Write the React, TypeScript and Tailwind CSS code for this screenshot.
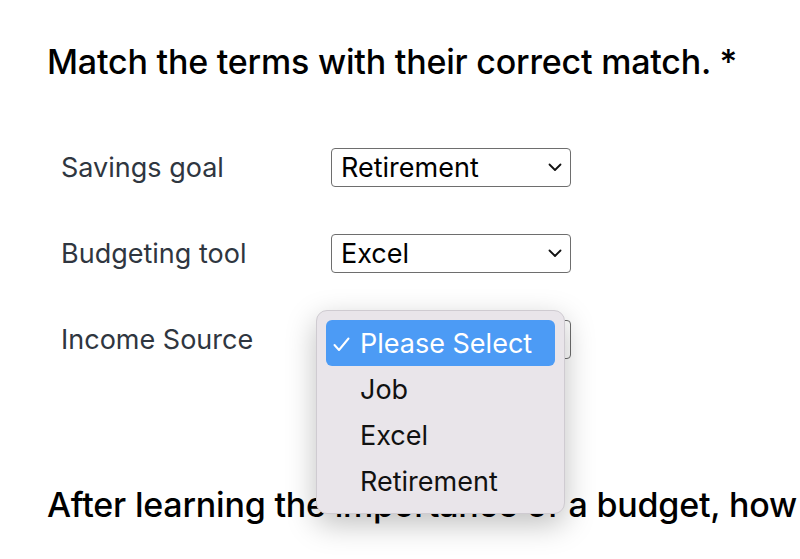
import React from 'react';

const rows = [
  { label: 'Savings goal', value: 'Retirement' },
  { label: 'Budgeting tool', value: 'Excel' },
  { label: 'Income Source', value: 'Please Select' },
];

const options = ['Job', 'Excel', 'Retirement'];

function Chevron() {
  return (
    <svg width="14" height="9" viewBox="0 0 14 9" fill="none">
      <path d="M1.5 1.5L7 7L12.5 1.5" stroke="#111" strokeWidth="1.8" strokeLinecap="round" strokeLinejoin="round" />
    </svg>
  );
}

function Check() {
  return (
    <svg width="17" height="15" viewBox="0 0 17 15" fill="none">
      <path d="M1.5 8L6 13L15.5 1.5" stroke="white" strokeWidth="2" strokeLinecap="round" strokeLinejoin="round" />
    </svg>
  );
}

function SelectBox({ value }: { value: string }) {
  return (
    <div className="flex h-[39px] w-[240px] items-center justify-between rounded-[4px] border border-[#6e6e6e] bg-white pl-[9px] pr-[8px]">
      <span className="text-[27px] leading-none text-black">{value}</span>
      <Chevron />
    </div>
  );
}

function Popup() {
  return (
    <div className="absolute left-[-15px] top-[-10px] z-10 w-[249px] rounded-[11px] border border-[#cfcbd1] bg-[#e9e5ea] p-[9px] shadow-[0_10px_30px_rgba(0,0,0,0.25)]">
      <div className="flex h-[46px] items-center rounded-[6px] bg-[#4c9bf5] pl-[7px] text-white">
        <span className="flex w-[27px] items-center pt-[2px]">
          <Check />
        </span>
        <span className="text-[27px] leading-none">Please Select</span>
      </div>
      {options.map((o) => (
        <div key={o} className="flex h-[46px] items-center pl-[34px] text-[27px] leading-none text-[#111]">
          {o}
        </div>
      ))}
    </div>
  );
}

export default function App() {
  return (
    <div className="h-[559px] w-[800px] overflow-hidden bg-white pl-[47px] pt-[42px] font-['Inter','Liberation_Sans',sans-serif]">
      <h2 className="text-[34px] font-medium leading-[40px] tracking-[-0.006em] text-black">
        Match the terms with their correct match. *
      </h2>
      <div className="mt-[66px] flex flex-col gap-[47px] pl-[14px]">
        {rows.map((r, i) => (
          <div key={r.label} className="flex items-center">
            <span className="w-[270px] text-[27px] leading-none text-[#2f3640]">{r.label}</span>
            <div className="relative">
              <SelectBox value={r.value} />
              {i === 2 && <Popup />}
            </div>
          </div>
        ))}
      </div>
      <h2 className="mt-[126px] whitespace-nowrap text-[34px] font-medium leading-[40px] tracking-[-0.006em] text-black">
        After learning the importance of a budget, how
      </h2>
    </div>
  );
}
